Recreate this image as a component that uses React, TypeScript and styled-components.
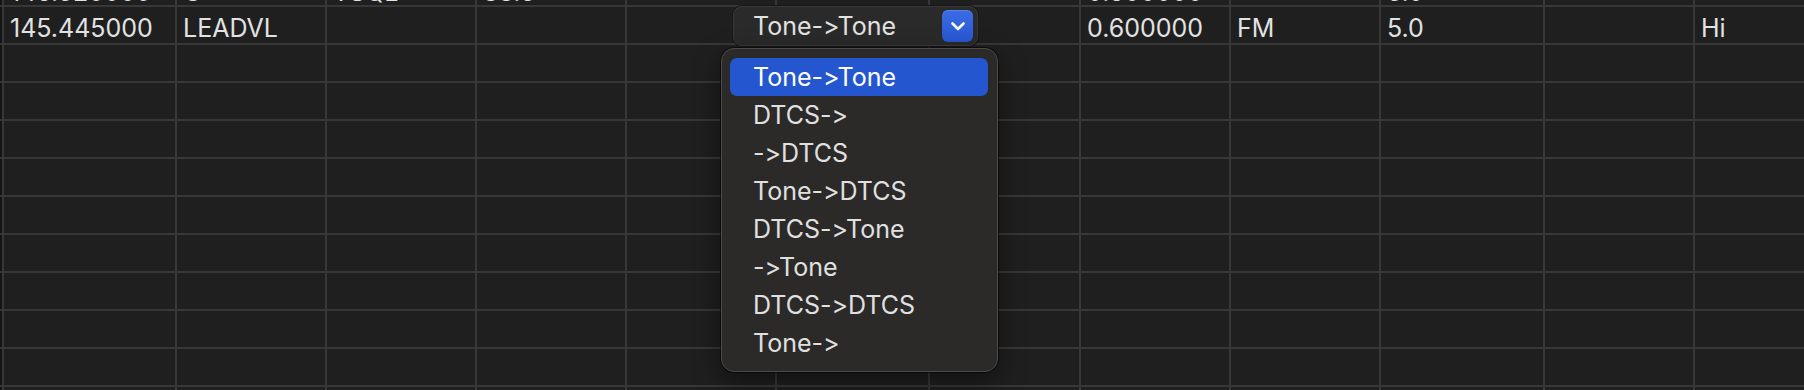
import React, { FC } from "react";
import styled, { createGlobalStyle } from "styled-components";

const GlobalStyle = createGlobalStyle`
  html, body {
    margin: 0;
    padding: 0;
    background: #1e1e1e;
  }
`;

const COLUMNS = [171, 148, 148, 148, 148, 151, 149, 148, 148, 162, 148];

const ROWS: string[][] = [
  ["146.520000", "C", "TSQL", "88.5", "", "", "", "0.600000", "", "5.0", "", ""],
  ["145.445000", "LEADVL", "", "", "", "", "", "0.600000", "FM", "5.0", "", "Hi"],
  ...Array.from({ length: 10 }, () => Array(12).fill("")),
];

const CROSS_MODES = [
  "Tone->Tone",
  "DTCS->",
  "->DTCS",
  "Tone->DTCS",
  "DTCS->Tone",
  "->Tone",
  "DTCS->DTCS",
  "Tone->",
];

const Viewport = styled.div`
  position: relative;
  width: 1804px;
  height: 390px;
  overflow: hidden;
  background: #1e1e1e;
  font-family: Inter, "Liberation Sans", sans-serif;
  font-feature-settings: "calt" 0, "liga" 0;
  font-variant-ligatures: none;
`;

const Sheet = styled.div`
  display: grid;
  grid-template-columns: 2px ${COLUMNS.map((w) => `${w}px`).join(" ")} 1fr;
  grid-auto-rows: 36px;
  gap: 2px;
  margin-top: -31px;
  background: #373737;
`;

const Gutter = styled.div`
  position: relative;
  background: #151515;

  ::after {
    background: #d8d8d8;
    bottom: -2px;
    content: "";
    height: 2px;
    left: 0;
    position: absolute;
    width: 1px;
  }
`;

// $scrolled: the row that is mostly scrolled out of view above the first one
const Cell = styled.div<{ $scrolled?: boolean }>`
  display: flex;
  align-items: center;
  padding: ${({ $scrolled }) => ($scrolled ? "10px" : "5px")} 6px 0;
  background: #1f1f1f;
  color: #e2e2e2;
  font-size: 25px;
  white-space: nowrap;
  overflow: hidden;
`;

const PopupButton = styled.div`
  position: absolute;
  left: 733px;
  top: 6px;
  width: 245px;
  height: 40px;
  box-sizing: border-box;
  display: flex;
  align-items: center;
  justify-content: space-between;
  padding: 0 4px 0 19px;
  background: #2a2a2a;
  border: 1px solid #3a3a3a;
  border-radius: 9px;
  box-shadow: 0 0 0 1px #161616;
  color: #e2e2e2;
  font-size: 25px;
`;

const Arrow = styled.span`
  display: flex;
  align-items: center;
  justify-content: center;
  width: 31px;
  height: 32px;
  border-radius: 6px;
  background: linear-gradient(#3a6ce4, #2757d1);
  box-shadow: inset 0 1px 0 rgba(255, 255, 255, 0.15);
`;

const Menu = styled.ul`
  position: absolute;
  left: 721px;
  top: 48px;
  width: 277px;
  box-sizing: border-box;
  margin: 0;
  padding: 9px 9px 9px 8px;
  list-style: none;
  background: #2b2a29;
  border: 1px solid #4d4c4b;
  border-radius: 13px;
  box-shadow: 0 0 0 1px rgba(0, 0, 0, 0.55), 0 10px 28px rgba(0, 0, 0, 0.45);
`;

const Item = styled.li<{ $selected?: boolean }>`
  display: flex;
  align-items: center;
  height: 38px;
  padding-left: 23px;
  border-radius: 7px;
  background: ${({ $selected }) => ($selected ? "#2457cf" : "transparent")};
  color: ${({ $selected }) => ($selected ? "#ffffff" : "#e0e0e0")};
  font-size: 25px;
`;

const Chevron: FC = () => (
  <svg width="14" height="9" viewBox="0 0 14 9" fill="none">
    <polyline
      points="1.5,1.5 7,7 12.5,1.5"
      stroke="#ffffff"
      strokeWidth="2.6"
      strokeLinecap="round"
      strokeLinejoin="round"
    />
  </svg>
);

const App: FC = () => (
  <>
    <GlobalStyle />
    <Viewport>
      <Sheet>
        {ROWS.map((row, r) => (
          <React.Fragment key={r}>
            <Gutter />
            {row.map((value, c) => (
              <Cell key={c} $scrolled={r === 0}>
                {value}
              </Cell>
            ))}
          </React.Fragment>
        ))}
      </Sheet>

      <PopupButton>
        <span>Tone-&gt;Tone</span>
        <Arrow>
          <Chevron />
        </Arrow>
      </PopupButton>

      <Menu>
        {CROSS_MODES.map((mode, i) => (
          <Item key={mode} $selected={i === 0}>
            {mode}
          </Item>
        ))}
      </Menu>
    </Viewport>
  </>
);

export default App;
